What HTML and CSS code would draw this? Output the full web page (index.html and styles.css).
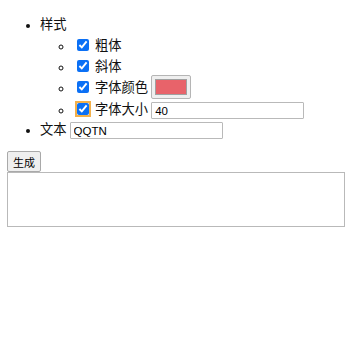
FILE: index.html
```html
<!DOCTYPE html>
<html lang="zh">
<head>
    <meta charset="UTF-8">
    <title>生成</title>
    <link rel="stylesheet" href="styles.css">
</head>
<body>
    <ul class="opts">
        <li class="row">样式
            <ul class="sub">
                <li class="row"><input type="checkbox" id="bold" checked> <label for="bold">粗体</label></li>
                <li class="row"><input type="checkbox" id="italic" checked> <label for="italic">斜体</label></li>
                <li class="row color-row"><input type="checkbox" id="useColor" checked> <label for="useColor">字体颜色</label> <input type="color" id="color" class="color-pick" value="#e8636a"></li>
                <li class="row"><input type="checkbox" id="useSize" class="focused" checked> <label for="useSize">字体大小</label> <input type="text" id="size" class="field" value="40"></li>
            </ul>
        </li>
        <li class="row"><span>文本</span> <input type="text" id="text" class="field" value="QQTN"></li>
    </ul>
    <button id="gen" class="gen-btn">生成</button>
    <textarea id="out" class="out"></textarea>
</body>
</html>
```

FILE: styles.css
```css
body {
    margin: 7px;
    font-family: "Noto Sans CJK SC", "Liberation Sans", sans-serif;
    font-size: 13.3px;
    color: #111;
}
.opts {
    margin: 7px 0 12px 0;
    padding-left: 33px;
}
.sub {
    margin: 0;
    padding-left: 33px;
}
.row::marker {
    font-size: 9.5px;
}
.row {
    line-height: 20px;
}
.sub .row {
    line-height: 21px;
}
input[type="checkbox"] {
    width: 12px;
    height: 12px;
    margin: 0 3px 0 4px;
    vertical-align: -1px;
    accent-color: #0b70f5;
}
.focused {
    outline: 2px solid #f3b04a;
    outline-offset: 0;
    border-radius: 3px;
}
.field {
    box-sizing: border-box;
    width: 153px;
    height: 17px;
    padding: 0 3px;
    border: 1px solid #b9b9b9;
    border-radius: 1px;
    font-family: "Liberation Sans", sans-serif;
    font-size: 11.5px;
    vertical-align: middle;
}
.color-row {
    line-height: 22px;
}
.color-pick {
    box-sizing: border-box;
    width: 40px;
    height: 24px;
    margin: -3px 0 -1px 0;
    padding: 3px;
    border: 1px solid #b5b5b5;
    border-radius: 2px;
    background: #efefef;
    vertical-align: middle;
}
.color-pick::-webkit-color-swatch-wrapper {
    padding: 0;
}
.color-pick::-webkit-color-swatch {
    border: 1px solid #a0a0a0;
    border-radius: 0;
}
.gen-btn {
    display: block;
    box-sizing: border-box;
    height: 21px;
    padding: 0 5px;
    border: 1px solid #a9a9a9;
    border-radius: 2px;
    background: #efefef;
    font-family: "Noto Sans CJK SC", sans-serif;
    font-size: 11px;
    color: #000;
}
.out {
    display: block;
    box-sizing: border-box;
    width: 338px;
    height: 55px;
    margin: 0;
    border: 1px solid #b9b9b9;
    resize: none;
}
```
